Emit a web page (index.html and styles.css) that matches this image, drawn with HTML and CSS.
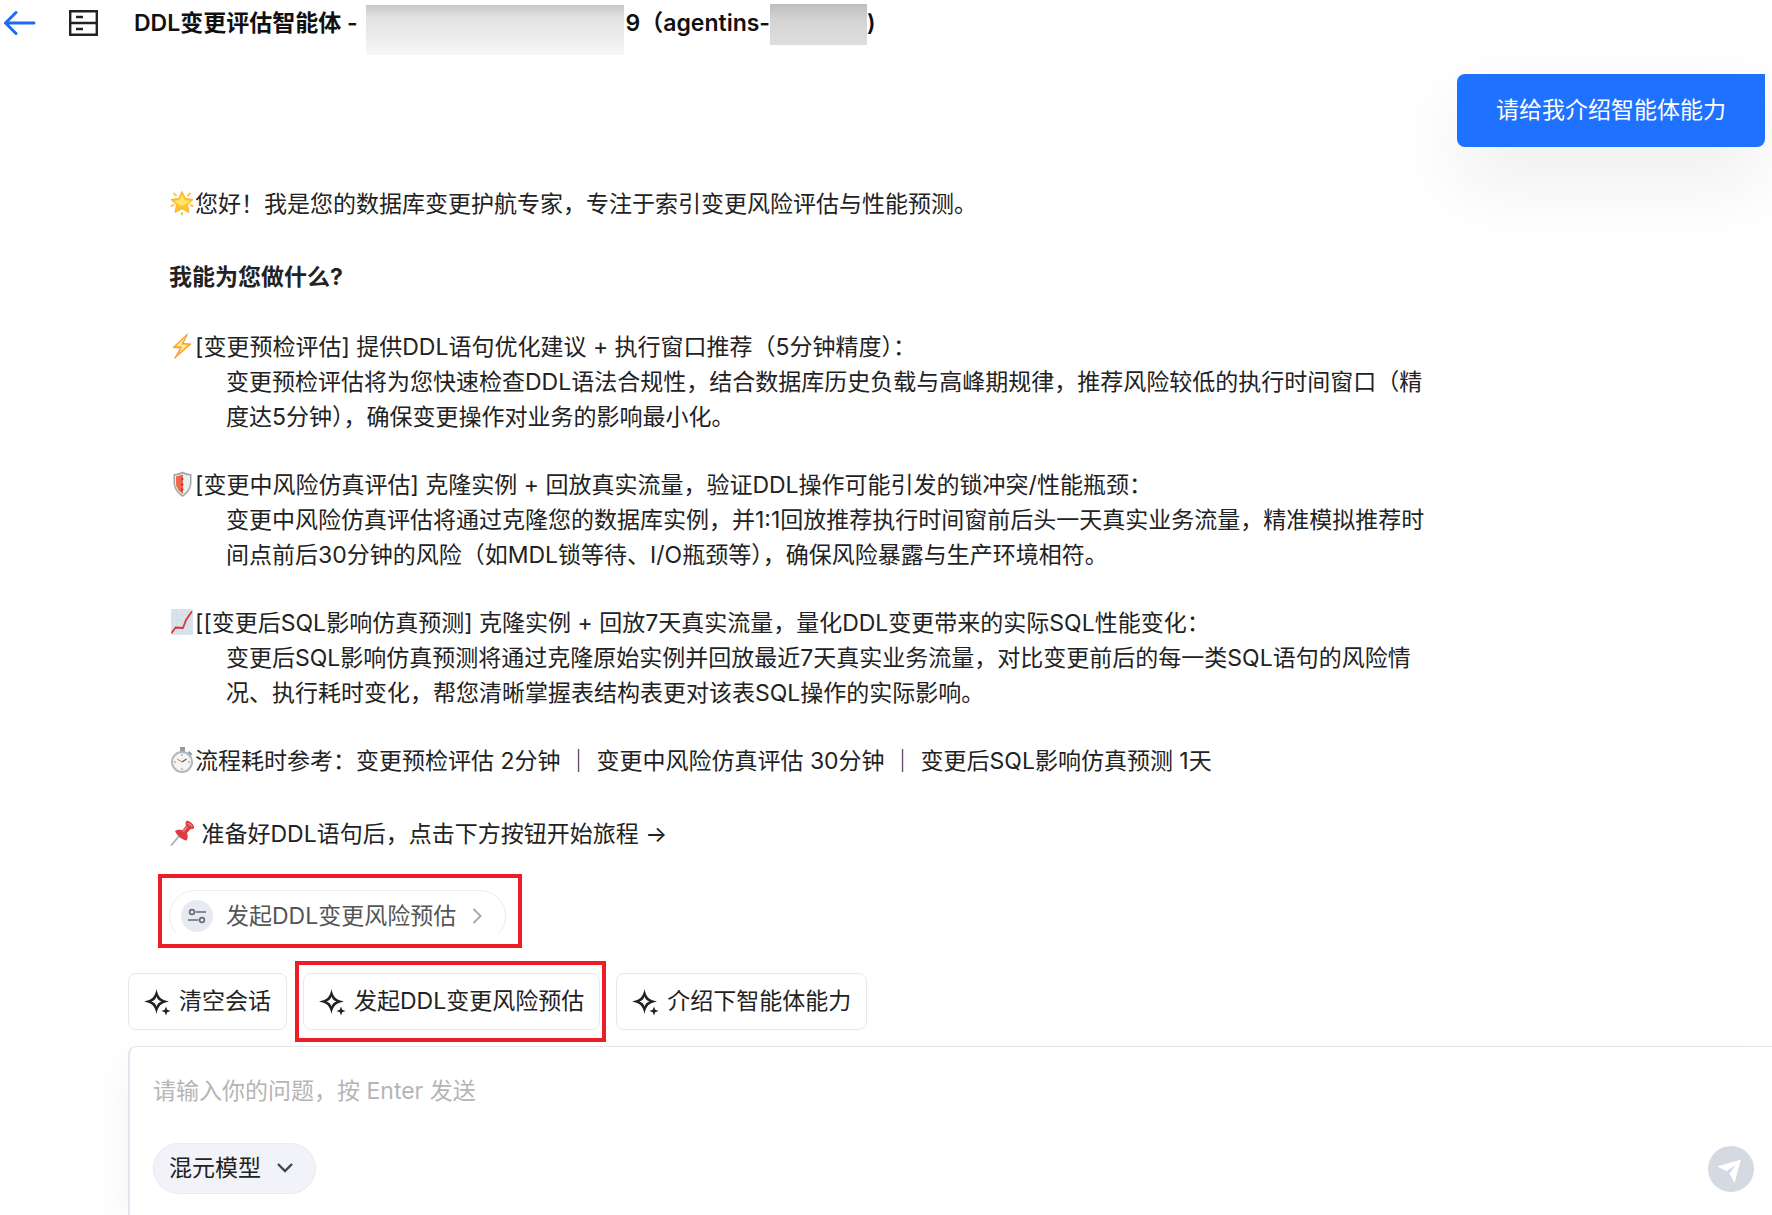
FILE: index.html
```html
<!DOCTYPE html>
<html lang="zh-CN">
<head>
  <meta charset="UTF-8">
  <meta name="viewport" content="width=device-width, initial-scale=1.0">
  <title>DDL变更评估智能体</title>
  <link rel="stylesheet" href="styles.css">
</head>
<body>

  <header class="header">
    <a class="back" href="#" aria-label="返回">
      <svg width="32" height="26" viewBox="0 0 32 26" fill="none" stroke="#1f6bf0" stroke-width="3" stroke-linecap="round" stroke-linejoin="round"><path d="M30 13H2M12 2.500L1.500 13 12 23.500"/></svg>
    </a>
    <button class="history" type="button" aria-label="历史会话">
      <svg width="30" height="28" viewBox="0 0 30 28" fill="none" stroke="#222" stroke-width="2.400"><path d="M2.200 2.200h26.600v23.600H2.200zM2.200 14h26.600M8 8h7M8 20h7"/></svg>
    </button>
    <h1>DDL变更评估智能体 - <span class="mask mask-name"></span>9（agentins-<span class="mask mask-id"></span>)</h1>
  </header>

  <main class="chat">
    <div class="user-message">请给我介绍智能体能力</div>

    <div class="reply">
      <p class="greeting"><svg class="emoji" viewBox="0 0 26 26"><g stroke="#fcc94e" stroke-width="2" stroke-linecap="round"><path d="M5 3.500l2 2M21 3.500l-2 2M13 23v1.500M2.500 16l2-1M23.500 16l-2-1"/></g><path d="M13 1.500l3.400 7 7.600 1-5.500 5.300 1.500 7.700-7-3.800-7 3.800 1.500-7.700L2 9.500l7.600-1z" fill="#fec52e" stroke="#fbb02c" stroke-width="1" stroke-linejoin="round"/><path d="M13 4.500l2.500 5.500 5.500 1-4.500 3.500L13 16l-3.500-1.500L5 11l5.500-1z" fill="#ffe566"/></svg>您好！我是您的数据库变更护航专家，专注于索引变更风险评估与性能预测。</p>

      <h2>我能为您做什么?</h2>

      <section class="ability">
        <p><svg class="emoji" viewBox="0 0 26 26"><path d="M18.500 1L4 14.500l7.500.5L5.500 25.500 22 11l-8-.5z" fill="#fdb52d" stroke="#f79a3b" stroke-width="1" stroke-linejoin="round"/><path d="M16 4.500L7.500 13l6 .5-3 6L18.500 12l-6.500-.5z" fill="#fff0a6"/></svg>[变更预检评估] 提供DDL语句优化建议 + 执行窗口推荐（5分钟精度）：</p>
        <p class="detail">变更预检评估将为您快速检查DDL语法合规性，结合数据库历史负载与高峰期规律，推荐风险较低的执行时间窗口（精<br>度达5分钟），确保变更操作对业务的影响最小化。</p>
      </section>

      <section class="ability">
        <p><svg class="emoji" viewBox="0 0 26 26"><path d="M13.500 .5c3 1.700 5.800 2.400 9 2.500v8c0 6-3 11-9 15-6-4-9-9-9-15V3c3.200-.1 6-.8 9-2.500z" fill="#a3a6a8"/><path d="M13.500 2.500c2.600 1.300 4.800 1.800 7.500 2v7c0 5-2.500 9-7.500 12.500C8.500 20.500 6 16.500 6 11.500v-7c2.700-.2 4.900-.7 7.500-2z" fill="#eceeef"/><path d="M14 3.200C12 4.300 9.500 5 7 5.200v6.500c0 4.500 2 8 7 11.300z" fill="#f0684d"/><path d="M12 6l3 2-3 2zM12 11.500l3 2-3 2zM12 17l3 1-3 3z" fill="#c83c2e"/></svg>[变更中风险仿真评估] 克隆实例 + 回放真实流量，验证DDL操作可能引发的锁冲突/性能瓶颈：</p>
        <p class="detail">变更中风险仿真评估将通过克隆您的数据库实例，并1:1回放推荐执行时间窗前后头一天真实业务流量，精准模拟推荐时<br>间点前后30分钟的风险（如MDL锁等待、I/O瓶颈等），确保风险暴露与生产环境相符。</p>
      </section>

      <section class="ability">
        <p><svg class="emoji" viewBox="0 0 26 26"><path d="M2 0h22v26H2z" fill="#dae3ea"/><path d="M2 5.500h22M2 11h22M2 16.500h22M2 22h22M7.500 0v26M13 0v26M18.500 0v26" stroke="#cfdae2" stroke-width=".5"/><path d="M3 23.500l3.500-5 7.500 .5 3-8L22.500 3" fill="none" stroke="#d8343b" stroke-width="1.800" stroke-linejoin="round" stroke-linecap="round"/></svg>[[变更后SQL影响仿真预测] 克隆实例 + 回放7天真实流量，量化DDL变更带来的实际SQL性能变化：</p>
        <p class="detail">变更后SQL影响仿真预测将通过克隆原始实例并回放最近7天真实业务流量，对比变更前后的每一类SQL语句的风险情<br>况、执行耗时变化，帮您清晰掌握表结构表更对该表SQL操作的实际影响。</p>
      </section>

      <p class="timing"><svg class="emoji" viewBox="0 0 26 26"><path d="M11 0h5v5h-5zM20 4l3.500 3-2 2-3-3z" fill="#939ba5"/><circle cx="13" cy="15" r="10" fill="#f5f4f1" stroke="#b3b7bf" stroke-width="2"/><path d="M13 7v2M13 21v2M5 15h2M19 15h2" stroke="#8d929b" stroke-width="1"/><path d="M13 15l4.500-3" stroke="#555" stroke-width="1.200"/><path d="M13 15l-5-3" stroke="#dc7666" stroke-width="1"/></svg>流程耗时参考：变更预检评估 2分钟 ｜ 变更中风险仿真评估 30分钟 ｜ 变更后SQL影响仿真预测 1天</p>

      <p class="start"><svg class="emoji" viewBox="0 0 26 26"><path d="M11 15L2.500 25" stroke="#a7b1bb" stroke-width="1.800" stroke-linecap="round"/><path d="M17.500 1c2-1.500 8.500 4 7.500 7-1 1.500-2.500 1-3.500 1L18 13c1 3 1 5.500-.5 7.500-4-.5-9.500-4.500-11.500-9.500 2-1.500 5-1.500 7.500-.8L17 5.500c-.7-1.500-.7-3.500.5-4.500z" fill="#dc3b42"/><path d="M19 3.500c1.500.2 3 1.500 3.800 3M14.500 11l3.500-4" stroke="#f58078" stroke-width="1.500" stroke-linecap="round" fill="none"/></svg> 准备好DDL语句后，点击下方按钮开始旅程 →</p>

      <div class="highlight">
        <div class="pill-clip">
          <button class="pill" type="button">
            <span class="pill-icon">
              <svg width="18" height="16" viewBox="0 0 18 16" fill="none" stroke="#666b75" stroke-width="1.600"><circle cx="4" cy="4" r="2.400"/><path d="M7.500 4H18M0 12h10.500"/><circle cx="14" cy="12" r="2.400"/></svg>
            </span>
            发起DDL变更风险预估
            <svg class="pill-arrow" width="10" height="16" viewBox="0 0 10 16" fill="none" stroke="#aaa" stroke-width="2"><path d="M1.500 1l7 7-7 7"/></svg>
          </button>
        </div>
      </div>
    </div>
  </main>

  <nav class="shortcuts">
    <button class="shortcut" type="button">
      <svg class="spark" viewBox="0 0 26 26"><path d="M12.500 0C14 8 17 11 25 12.500 17 14 14 17 12.500 25 11 17 8 14 0 12.500 8 11 11 8 12.500 0zM12.500 7.500C11.700 10 10 11.700 7.500 12.500 10 13.300 11.700 15 12.500 17.500 13.300 15 15 13.300 17.500 12.500 15 11.700 13.300 10 12.500 7.500z"/><path d="M22 17.500l1.200 3.300 3.300 1.200-3.300 1.200-1.200 3.300-1.200-3.300-3.300-1.200 3.300-1.200z"/></svg>
      清空会话
    </button>
    <div class="marked">
      <button class="shortcut" type="button">
        <svg class="spark" viewBox="0 0 26 26"><path d="M12.500 0C14 8 17 11 25 12.500 17 14 14 17 12.500 25 11 17 8 14 0 12.500 8 11 11 8 12.500 0zM12.500 7.500C11.700 10 10 11.700 7.500 12.500 10 13.300 11.700 15 12.500 17.500 13.300 15 15 13.300 17.500 12.500 15 11.700 13.300 10 12.500 7.500z"/><path d="M22 17.500l1.200 3.300 3.300 1.200-3.300 1.200-1.200 3.300-1.200-3.300-3.300-1.200 3.300-1.200z"/></svg>
        发起DDL变更风险预估
      </button>
    </div>
    <button class="shortcut" type="button">
      <svg class="spark" viewBox="0 0 26 26"><path d="M12.500 0C14 8 17 11 25 12.500 17 14 14 17 12.500 25 11 17 8 14 0 12.500 8 11 11 8 12.500 0zM12.500 7.500C11.700 10 10 11.700 7.500 12.500 10 13.300 11.700 15 12.500 17.500 13.300 15 15 13.300 17.500 12.500 15 11.700 13.300 10 12.500 7.500z"/><path d="M22 17.500l1.200 3.300 3.300 1.200-3.300 1.200-1.200 3.300-1.200-3.300-3.300-1.200 3.300-1.200z"/></svg>
      介绍下智能体能力
    </button>
  </nav>

  <form class="composer">
    <textarea rows="1" aria-label="问题" placeholder="请输入你的问题，按 Enter 发送"></textarea>
    <div class="composer-bar">
      <div class="model">
        <select aria-label="模型">
          <option>混元模型</option>
        </select>
        <svg class="model-arrow" width="16" height="10" viewBox="0 0 16 10" fill="none" stroke="#444" stroke-width="2.400"><path d="M1 1l7 7 7-7"/></svg>
      </div>
      <button class="send" type="submit" aria-label="发送">
        <svg width="46" height="46" viewBox="0 0 46 46"><path d="M9 20.500L33 13.500 26.500 37 21.500 27.500 28 19 18.500 25z" fill="#fff"/></svg>
      </button>
    </div>
  </form>

</body>
</html>
```

FILE: styles.css
```css
* {
  box-sizing: border-box;
}

body {
  font-family: Inter, "Noto Sans CJK SC", sans-serif;
  font-size: 23px;
  line-height: 35px;
  color: #222;
  margin: 0;
  background-color: #fff;
  min-height: 100vh;
  display: flex;
  flex-direction: column;
  overflow-x: hidden;
}

h1,
h2,
p {
  margin: 0;
  font-size: 23px;
}

button,
select,
textarea {
  font: inherit;
  color: inherit;
}

svg {
  display: block;
  flex: none;
}

/* header */
.header {
  display: flex;
  align-items: center;
  height: 46px;
  padding-left: 4px;
}

.header h1 {
  display: flex;
  align-items: center;
  font-weight: 600;
  color: #111;
  white-space: pre;
}

.history {
  margin: 0 36px 0 32px;
  padding: 0;
  border: none;
  background: none;
}

.mask {
  background: linear-gradient(#c8c8c8, #e2e2e2 25%, #ebebeb 60%, #f8f8f8);
}

.mask-name {
  width: 258px;
  height: 50px;
  margin: 14px 2px 0;
}

.mask-id {
  width: 97px;
  height: 41px;
  margin-top: 2px;
  background: linear-gradient(#bebebe, #d4d4d4 40%, #dedede);
}

/* chat */
.chat {
  display: flex;
  flex-direction: column;
}

.user-message {
  align-self: flex-end;
  margin: 28px 7px 0 0;
  padding: 19px 39px;
  border-radius: 8px 0 8px 8px;
  background-color: #1f71ff;
  color: #fff;
  box-shadow: 0 32px 80px rgba(0, 0, 0, 0.08);
}

.reply {
  margin: 40px 16px 0 169px;
}

.emoji {
  display: inline-block;
  width: 26px;
  height: 26px;
  vertical-align: -4px;
}

.greeting {
  margin-bottom: 38px;
}

.reply h2 {
  margin-bottom: 35px;
  font-weight: 700;
}

.ability {
  margin-bottom: 33px;
}

.detail {
  padding-left: 57px;
}

.timing {
  margin-bottom: 38px;
}

.highlight {
  width: fit-content;
  margin: 22px 0 0 -11px;
  padding: 12px 12px 10px 7px;
  border: 4px solid #ee1c25;
}

.pill-clip {
  height: 44px;
  overflow: hidden;
}

.pill {
  display: flex;
  align-items: center;
  height: 52px;
  padding: 0 23px 0 11px;
  border: 1px solid #ececec;
  border-radius: 26px;
  background-color: #fff;
  color: #555;
}

.pill-icon {
  display: flex;
  align-items: center;
  justify-content: center;
  width: 32px;
  height: 32px;
  margin-right: 13px;
  border-radius: 50%;
  background-color: #e7eaf0;
}

.pill-arrow {
  margin-left: 16px;
}

/* shortcuts */
.shortcuts {
  display: flex;
  gap: 16px;
  margin: 25px 0 16px 128px;
}

.shortcut {
  display: flex;
  align-items: center;
  gap: 9px;
  height: 57px;
  padding: 0 15px;
  border: 1px solid #e6e8ef;
  border-radius: 8px;
  background-color: #fff;
}

.spark {
  width: 26px;
  height: 26px;
  fill: #222;
  fill-rule: evenodd;
  overflow: visible;
}

.marked {
  position: relative;
}

.marked::after {
  content: "";
  position: absolute;
  inset: -12px -6px -12px -8px;
  border: 4px solid #ee1c25;
  pointer-events: none;
}

/* composer */
.composer {
  flex: 1;
  margin-left: 128px;
  padding: 27px 18px 22px 23px;
  border-top: 1px solid #e2e6ef;
  border-left: 2px solid #e2e6ef;
  border-top-left-radius: 8px;
  box-shadow: 0 16px 40px rgba(0, 0, 0, 0.05);
}

.composer textarea {
  display: block;
  width: 100%;
  height: 35px;
  padding: 0;
  border: none;
  outline: none;
  resize: none;
  overflow: hidden;
  background: none;
}

.composer textarea::placeholder {
  color: #b5b5b5;
}

.composer-bar {
  display: flex;
  align-items: center;
  justify-content: space-between;
  margin-top: 34px;
}

.model {
  position: relative;
}

.model select {
  appearance: none;
  display: block;
  width: 163px;
  height: 51px;
  padding: 0 15px;
  border: 1px solid #e8eaf2;
  border-radius: 26px;
  background-color: #f2f3f8;
}

.model-arrow {
  position: absolute;
  top: 20px;
  right: 23px;
  pointer-events: none;
}

.send {
  width: 46px;
  height: 46px;
  padding: 0;
  border: none;
  border-radius: 50%;
  background-color: #d5d9e2;
}
```
